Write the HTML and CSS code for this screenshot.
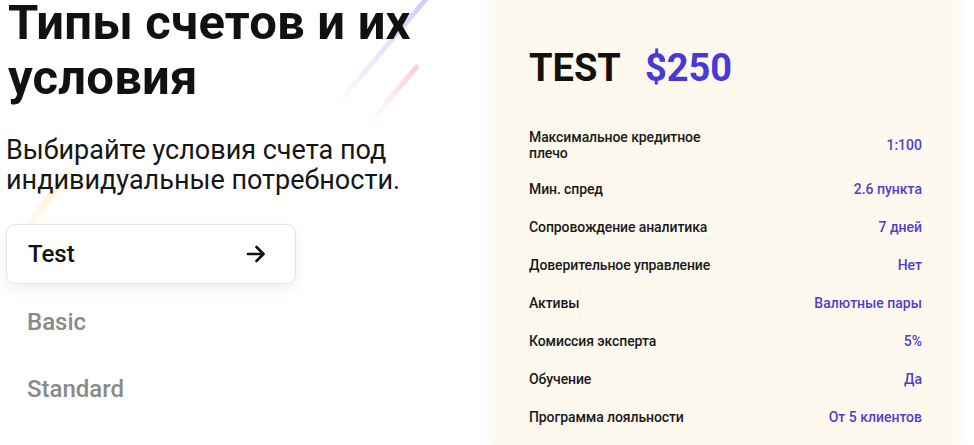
FILE: index.html
```html
<!DOCTYPE html>
<html lang="ru">
<head>
    <meta charset="UTF-8">
    <meta name="viewport" content="width=device-width, initial-scale=1.0">
    <title>Типы счетов</title>
    <link rel="stylesheet" href="styles.css">
</head>
<body>
    <div class="page">
        <div class="streak streak-blue"></div>
        <div class="streak streak-pink"></div>
        <div class="streak streak-yellow"></div>

        <div class="intro">
            <h1>Типы счетов и их условия</h1>
            <p class="lead">Выбирайте условия счета под индивидуальные потребности.</p>
            <div class="tabs">
                <div class="tab active">
                    <span>Test</span>
                    <svg width="20" height="20" viewBox="0 0 20 20" fill="none" stroke="#111" stroke-width="2.6" stroke-linecap="round" stroke-linejoin="round">
                        <path d="M2 10h15"/>
                        <path d="M10.5 3l7 7-7 7"/>
                    </svg>
                </div>
                <div class="tab">Basic</div>
                <div class="tab">Standard</div>
            </div>
        </div>

        <div class="card">
            <div class="card-title">
                <span class="name">TEST</span>
                <span class="price">$250</span>
            </div>
            <div class="rows">
                <div class="row"><span class="label wrap">Максимальное кредитное плечо</span><span class="value">1:100</span></div>
                <div class="row"><span class="label">Мин. спред</span><span class="value">2.6 пункта</span></div>
                <div class="row"><span class="label">Сопровождение аналитика</span><span class="value">7 дней</span></div>
                <div class="row"><span class="label">Доверительное управление</span><span class="value">Нет</span></div>
                <div class="row"><span class="label">Активы</span><span class="value">Валютные пары</span></div>
                <div class="row"><span class="label">Комиссия эксперта</span><span class="value">5%</span></div>
                <div class="row"><span class="label">Обучение</span><span class="value">Да</span></div>
                <div class="row"><span class="label">Программа лояльности</span><span class="value">От 5 клиентов</span></div>
            </div>
        </div>
    </div>
</body>
</html>
```

FILE: styles.css
```css
body {
    margin: 0;
    padding: 0;
    font-family: Roboto, "Liberation Sans", sans-serif;
    background: #fff;
    color: #111;
    overflow: hidden;
}
.page {
    position: relative;
    display: flex;
    align-items: flex-start;
    height: 445px;
}
.intro {
    position: relative;
    width: 492px;
    padding-left: 6px;
    box-sizing: border-box;
}
h1 {
    margin: -5px 0 0 2px;
    font-size: 49px;
    font-weight: 700;
    line-height: 55px;
    letter-spacing: 0.2px;
    width: 430px;
}
.lead {
    margin: 30px 0 0 0;
    font-size: 27px;
    line-height: 30px;
    width: 420px;
    color: #151515;
}
.tabs {
    margin-top: 29px;
    width: 290px;
}
.tab {
    height: 58px;
    display: flex;
    align-items: center;
    justify-content: space-between;
    padding: 0 29px 0 21px;
    font-size: 24px;
    font-weight: 500;
    color: #8a8a8a;
    margin-bottom: 9px;
}
.tab.active {
    color: #111;
    background: #fff;
    border: 1px solid #e4e4e4;
    border-radius: 9px;
    box-shadow: 0 6px 14px rgba(0, 0, 0, 0.06);
}
.card {
    width: 465px;
    margin-top: -20px;
    height: 480px;
    background: #fdf9ee;
    border-radius: 14px;
    padding: 64px 35px 0 37px;
    box-sizing: border-box;
    box-shadow: 0 0 14px rgba(120, 120, 200, 0.08);
}
.card-title {
    display: flex;
    align-items: baseline;
    gap: 24px;
    font-size: 38px;
    font-weight: 700;
    line-height: 48px;
}
.name {
    color: #111;
}
.price {
    color: #4a38d8;
}
.rows {
    margin-top: 28px;
}
.row {
    display: flex;
    justify-content: space-between;
    align-items: center;
    min-height: 38px;
    font-size: 14px;
    line-height: 16px;
}
.label {
    font-weight: 500;
    color: #1a1a1a;
    letter-spacing: -0.1px;
}
.label.wrap {
    width: 190px;
}
.row:first-child {
    min-height: 50px;
}
.value {
    color: #4f3fcc;
    font-weight: 500;
}
.streak {
    position: absolute;
    height: 5px;
    border-radius: 3px;
    transform-origin: left center;
}
.streak-blue {
    left: 335px;
    top: 105px;
    width: 145px;
    transform: rotate(-50deg);
    background: linear-gradient(90deg, rgba(190, 190, 250, 0), rgba(170, 160, 245, 0.55));
}
.streak-pink {
    left: 370px;
    top: 120px;
    width: 75px;
    transform: rotate(-50deg);
    background: linear-gradient(90deg, rgba(250, 190, 220, 0), rgba(245, 170, 210, 0.6));
}
.streak-yellow {
    left: 20px;
    top: 235px;
    width: 110px;
    height: 8px;
    transform: rotate(-55deg);
    background: linear-gradient(90deg, rgba(255, 230, 170, 0), rgba(255, 225, 160, 0.4), rgba(255, 230, 170, 0));
}
```
